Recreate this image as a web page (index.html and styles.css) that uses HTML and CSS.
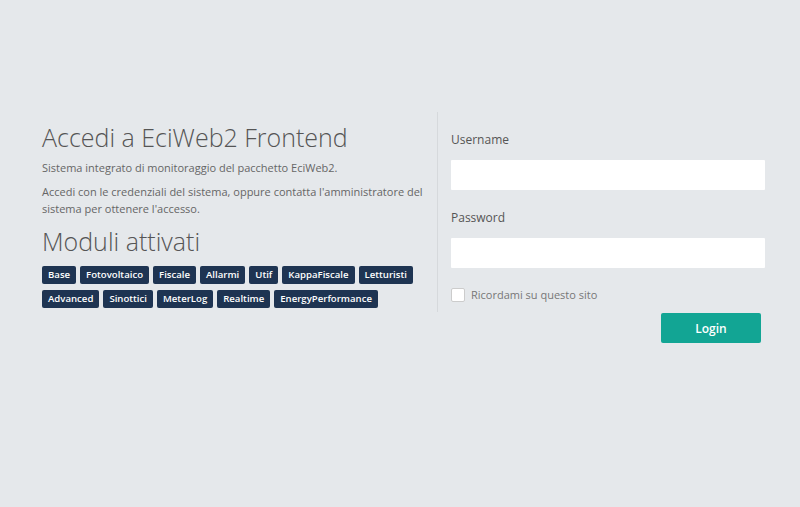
FILE: index.html
```html
<!DOCTYPE html>
<html lang="it">
<head>
    <meta charset="UTF-8">
    <meta name="viewport" content="width=device-width, initial-scale=1.0">
    <title>EciWeb2 Frontend - Login</title>
    <link rel="stylesheet" href="styles.css">
</head>
<body>
    <div class="login-wrap">
        <!-- Info -->
        <div class="intro">
            <h1>Accedi a EciWeb2 Frontend</h1>
            <p>Sistema integrato di monitoraggio del pacchetto EciWeb2.</p>
            <p>Accedi con le credenziali del sistema, oppure contatta l'amministratore del sistema per ottenere l'accesso.</p>
            <h2>Moduli attivati</h2>
            <div class="modules">
                <span class="badge">Base</span>
                <span class="badge">Fotovoltaico</span>
                <span class="badge">Fiscale</span>
                <span class="badge">Allarmi</span>
                <span class="badge">Utif</span>
                <span class="badge">KappaFiscale</span>
                <span class="badge">Letturisti</span>
                <span class="badge">Advanced</span>
                <span class="badge">Sinottici</span>
                <span class="badge">MeterLog</span>
                <span class="badge">Realtime</span>
                <span class="badge">EnergyPerformance</span>
            </div>
        </div>

        <!-- Login form -->
        <form class="login-form">
            <div class="fields">
                <label for="username">Username</label>
                <input type="text" id="username">
                <label for="password">Password</label>
                <input type="password" id="password">
                <label class="remember"><input type="checkbox"> Ricordami su questo sito</label>
            </div>
            <div class="actions">
                <button type="submit">Login</button>
            </div>
        </form>
    </div>
</body>
</html>
```

FILE: styles.css
```css
body {
    margin: 0;
    background-color: #e5e8eb;
    font-family: "Open Sans", Arial, sans-serif;
    color: #666;
}

.login-wrap {
    display: flex;
    padding: 112px 35px 0 42px;
}

.intro {
    width: 395px;
    padding-top: 8px;
}

h1, h2 {
    font-weight: 300;
    font-size: 25px;
    color: #555;
    margin: 0;
    line-height: 34px;
}

.intro p {
    font-size: 11px;
    line-height: 17px;
    margin: 5px 0 0;
    color: #666;
}

.intro p + p {
    margin-top: 7px;
}

h2 {
    margin-top: 7px;
}

.modules {
    display: flex;
    flex-wrap: wrap;
    gap: 6px 4px;
    margin-top: 8px;
}

.badge {
    background-color: #1e3452;
    color: white;
    font-size: 9.6px;
    font-weight: 600;
    line-height: 18px;
    padding: 0 6px;
    border-radius: 2px;
}

.login-form {
    flex: 1;
}

.fields {
    border-left: 1px solid #d6d9dc;
    padding: 16px 0 5px 13px;
    display: flex;
    flex-direction: column;
}

label {
    font-size: 12px;
    color: #555;
    line-height: 24px;
}

.fields input[type=text], .fields input[type=password] {
    height: 30px;
    border: none;
    border-radius: 1px;
    background: white;
    margin: 8px 0 16px;
    padding: 0 8px;
}

.remember {
    display: flex;
    align-items: center;
    gap: 6px;
    color: #777;
    font-size: 11px;
    margin-top: -1px;
}

.remember input {
    appearance: none;
    width: 14px;
    height: 14px;
    margin: 0;
    background: white;
    border: 1px solid #ccc;
    border-radius: 2px;
}

.actions {
    display: flex;
    justify-content: flex-end;
    padding-right: 4px;
    margin-top: 1px;
}

button {
    width: 100px;
    height: 30px;
    background-color: #12a594;
    color: white;
    border: none;
    border-radius: 2px;
    font-family: "Open Sans", Arial, sans-serif;
    font-size: 12px;
    font-weight: 600;
    cursor: pointer;
}
```
